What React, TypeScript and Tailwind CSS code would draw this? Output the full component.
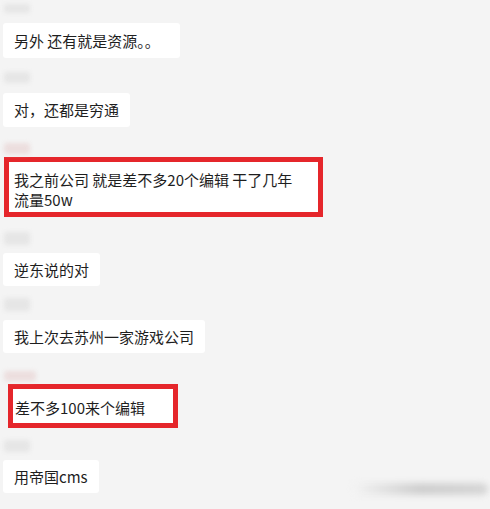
import React from "react";

const font = { fontFamily: '"Noto Sans CJK SC", "Noto Sans", sans-serif' };

function Blur({ mt, w = 26, h = 10, pink = false }: { mt: string; w?: number; h?: number; pink?: boolean }) {
  return (
    <div
      className={`${mt} ml-[1px] rounded-[3px] blur-[2px] ${pink ? "bg-[#ecdede]" : "bg-[#e6e6e6]"}`}
      style={{ width: w, height: h }}
    />
  );
}

function Bubble({ mt, h, w = "", children }: { mt: string; h: string; w?: string; children: React.ReactNode }) {
  return (
    <div className={`${mt} ${h} ${w} self-start flex items-center bg-white rounded-[3px] pl-[11px] pr-[11px] text-[15px] leading-[20px] text-[#1e1e1e] whitespace-nowrap`}>
      {children}
    </div>
  );
}

export default function App() {
  return (
    <div
      className="relative w-[490px] h-[509px] overflow-hidden bg-[#f4f4f4] flex flex-col pl-[3px]"
      style={font}
    >
      <Blur mt="mt-[4px]" h={9} />
      <Bubble mt="mt-[10px]" h="h-[35px]" w="w-[177px]">另外 还有就是资源。。</Bubble>
      <Blur mt="mt-[14px]" h={11} />
      <Bubble mt="mt-[10px]" h="h-[34px]">对，还都是穷通</Bubble>
      <Blur mt="mt-[16px]" h={11} pink />
      <div className="mt-[3px] ml-[1px] self-start border-[5px] border-[#e5262b] bg-white">
        <div className="w-[309px] h-[50px] pt-[8px] pl-[5px] text-[15px] leading-[20px] text-[#1e1e1e]">
          我之前公司 就是差不多20个编辑 干了几年
          <br />
          流量50w
        </div>
      </div>
      <Blur mt="mt-[15px]" h={13} />
      <Bubble mt="mt-[8px]" h="h-[33px]">逆东说的对</Bubble>
      <Blur mt="mt-[12px]" h={13} />
      <Bubble mt="mt-[9px]" h="h-[33px]">我上次去苏州一家游戏公司</Bubble>
      <Blur mt="mt-[18px]" w={32} h={10} pink />
      <div className="mt-[3px] ml-[5px] self-start border-[5px] border-[#e5262b] bg-white">
        <div className="w-[160px] h-[34px] pt-[9px] pl-[2px] text-[15px] leading-[20px] text-[#1e1e1e] whitespace-nowrap">
          差不多100来个编辑
        </div>
      </div>
      <Blur mt="mt-[12px]" h={12} />
      <Bubble mt="mt-[8px]" h="h-[33px]">用帝国cms</Bubble>
      <div className="absolute left-[352px] top-[483px] w-[136px] h-[12px] rounded-full bg-gradient-to-r from-[#f4f4f4] via-[#cfcfcf] to-[#d6d6d6] blur-[3px]" />
    </div>
  );
}
